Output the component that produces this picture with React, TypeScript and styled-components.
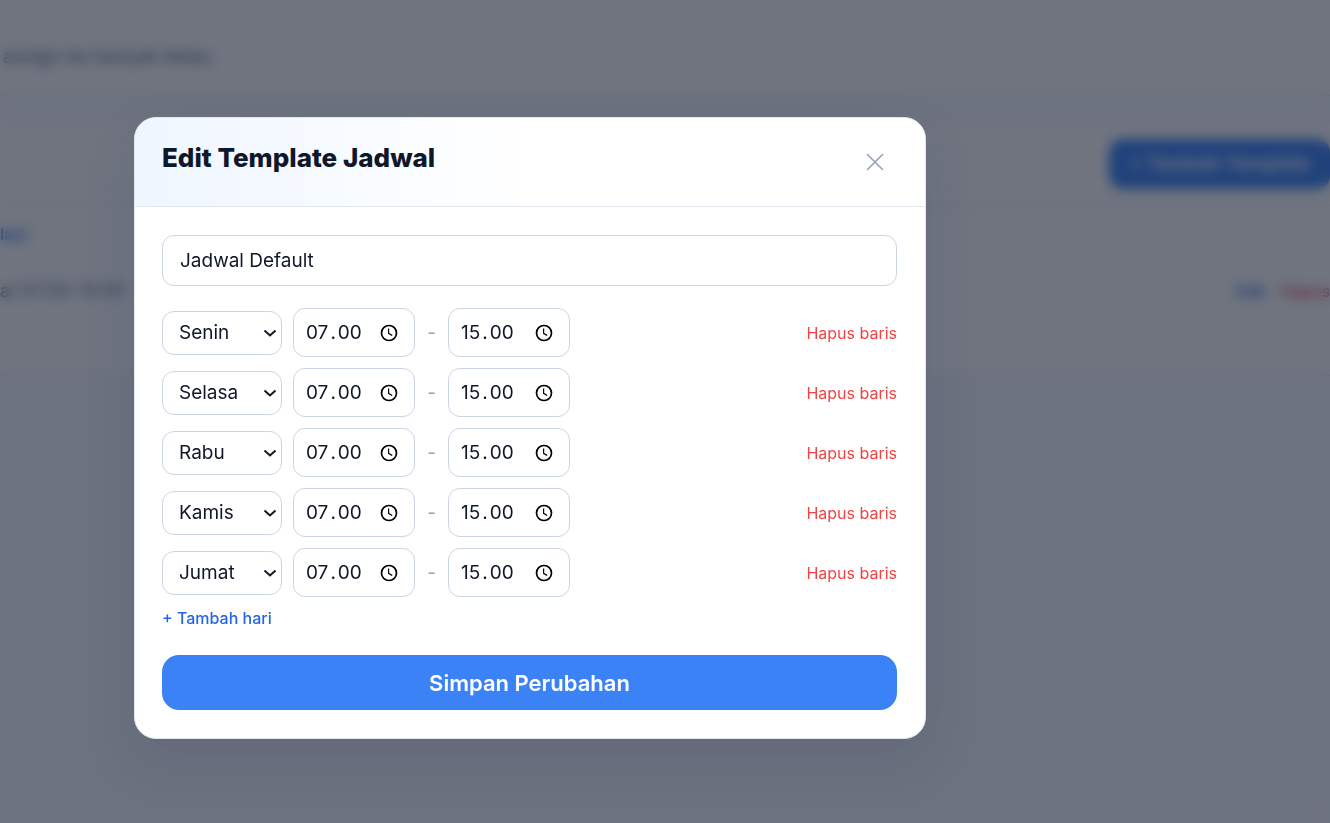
import React from "react";
import styled, { createGlobalStyle } from "styled-components";

const GlobalStyle = createGlobalStyle`
  *, *::before, *::after { box-sizing: border-box; }
  body {
    margin: 0;
    background: #f8fafc;
    color: #0f172a;
    font-family: Inter, "Liberation Sans", sans-serif;
    font-size: 19px;
    line-height: 28px;
  }
  button, input, select { font: inherit; color: inherit; }
`;

const Page = styled.div`
  min-height: 100vh;
  overflow: hidden;
`;

const PageHeader = styled.header`
  background: #ffffff;
  border-bottom: 1px solid #e2e8f0;
  padding: 43px 3px 24px;
  color: #64748b;
`;

const Card = styled.section`
  margin-top: 25px;
  background: #ffffff;
  border-bottom: 1px solid #e2e8f0;
`;

const CardBar = styled.div`
  display: flex;
  justify-content: flex-end;
  padding: 18px 0 16px;
  border-bottom: 1px solid #e2e8f0;
`;

const AddTemplate = styled.button`
  height: 50px;
  padding: 0 20px;
  border: 0;
  border-radius: 14px;
  background: #3b82f6;
  color: #ffffff;
  font-weight: 600;
`;

const CardRow = styled.div<{ $tall?: boolean }>`
  display: flex;
  justify-content: space-between;
  padding: ${(p) => (p.$tall ? "12px 0 70px" : "14px 0 16px")};
  border-top: ${(p) => (p.$tall ? "1px solid #f1f5f9" : "0")};
  color: #64748b;
  font-size: 18px;
`;

const PageLink = styled.a<{ $danger?: boolean }>`
  color: ${(p) => (p.$danger ? "#ef4444" : "#2563eb")};
  text-decoration: none;
  font-size: 16px;
  font-weight: 500;
`;

const RowActions = styled.div`
  display: flex;
  gap: 16px;
`;

const Overlay = styled.div`
  position: fixed;
  inset: 0;
  overflow: auto;
  padding: 117px 134px 40px;
  background: rgba(15, 23, 42, 0.6);
  backdrop-filter: blur(6px);
`;

const Dialog = styled.div`
  width: 100%;
  max-width: 792px;
  overflow: hidden;
  background: #ffffff;
  border: 1px solid #e2e8f0;
  border-radius: 22px;
  box-shadow: 0 22px 52px rgba(20, 50, 100, 0.13);
`;

const DialogHeader = styled.header`
  display: flex;
  justify-content: space-between;
  align-items: flex-start;
  padding: 24px 28px 24px 27px;
  border-bottom: 1px solid #e2e8f0;
  background: linear-gradient(90deg, #eff6ff, #ffffff 50%);
`;

const Title = styled.h2`
  margin: 0;
  font-size: 26px;
  line-height: 32px;
  font-weight: 800;
`;

const CloseButton = styled.button`
  display: grid;
  place-items: center;
  width: 44px;
  height: 40px;
  padding: 0;
  border: 0;
  background: none;
  color: #94a3b8;
`;

const Form = styled.form`
  display: flex;
  flex-direction: column;
  padding: 28px 28px 28px 27px;
`;

const NameInput = styled.input`
  width: 100%;
  height: 51px;
  padding: 0 17px;
  border: 1px solid #cbd5e1;
  border-radius: 12px;
  background: #ffffff;
`;

const Rows = styled.div`
  display: flex;
  flex-direction: column;
  gap: 11px;
  margin-top: 22px;
`;

const Row = styled.div`
  display: flex;
  align-items: center;
  gap: 11px;
`;

const DayBox = styled.div`
  display: grid;
  align-items: center;
  width: 120px;

  svg {
    grid-area: 1 / 1;
    justify-self: end;
    margin-right: 5px;
    pointer-events: none;
  }
`;

const DaySelect = styled.select`
  grid-area: 1 / 1;
  appearance: none;
  width: 100%;
  height: 44px;
  padding: 0 24px 0 16px;
  border: 1px solid #cbd5e1;
  border-radius: 12px;
  background: #ffffff;
`;

const TimeBox = styled.div`
  display: flex;
  align-items: center;
  width: 122px;
  height: 49px;
  padding: 0 16px 0 11px;
  border: 1px solid #cbd5e1;
  border-radius: 12px;
  background: #ffffff;
`;

const TimePart = styled.input`
  field-sizing: content;
  padding: 0 1px;
  border: 0;
  background: none;
`;

const TimeDot = styled.span`
  padding: 0 1px;
`;

const ClockButton = styled.button`
  display: grid;
  margin-left: auto;
  padding: 0;
  border: 0;
  background: none;
  color: #000000;
`;

const Dash = styled.span`
  width: 11px;
  text-align: center;
  color: #94a3b8;
`;

const RemoveButton = styled.button`
  margin-left: auto;
  padding: 0;
  border: 0;
  background: none;
  color: #ef4444;
  font-size: 16px;
`;

const AddDay = styled.button`
  align-self: flex-start;
  margin-top: 7px;
  padding: 0;
  border: 0;
  background: none;
  color: #2563eb;
  font-size: 16px;
  font-weight: 500;
`;

const SaveButton = styled.button`
  height: 55px;
  margin-top: 23px;
  border: 0;
  border-radius: 17px;
  background: #3b82f6;
  color: #ffffff;
  font-size: 22px;
  font-weight: 600;
`;

function TimeField({ label, value }: { label: string; value: string }) {
  const [hour, minute] = value.split(".");
  return (
    <TimeBox role="group" aria-label={label}>
      <TimePart aria-label="Jam" inputMode="numeric" maxLength={2} defaultValue={hour} />
      <TimeDot>.</TimeDot>
      <TimePart aria-label="Menit" inputMode="numeric" maxLength={2} defaultValue={minute} />
      <ClockButton type="button" aria-label="Pilih waktu">
        <svg width="18" height="18" viewBox="0 0 18 18" fill="none" stroke="currentColor">
          <circle cx="9" cy="9" r="7.5" strokeWidth="1.7" />
          <path d="M8.6 4.6v4.7l3.6 2.2" strokeWidth="1.2" />
        </svg>
      </ClockButton>
    </TimeBox>
  );
}

const days = ["Senin", "Selasa", "Rabu", "Kamis", "Jumat"];

export default function App() {
  return (
    <>
      <GlobalStyle />
      <Page>
        <PageHeader>assign ke banyak kelas.</PageHeader>
        <Card>
          <CardBar>
            <AddTemplate type="button">+ Tambah Template</AddTemplate>
          </CardBar>
          <CardRow><PageLink href="#kelas">las)</PageLink></CardRow>
          <CardRow $tall>
            <span>at 07:00-15:00</span>
            <RowActions>
              <PageLink href="#edit">Edit</PageLink>
              <PageLink href="#hapus" $danger>Hapus</PageLink>
            </RowActions>
          </CardRow>
        </Card>
      </Page>
      <Overlay>
        <Dialog role="dialog" aria-modal="true" aria-labelledby="dialog-title">
          <DialogHeader>
            <Title id="dialog-title">Edit Template Jadwal</Title>
            <CloseButton type="button" aria-label="Tutup">
              <svg width="18" height="18" viewBox="0 0 18 18" fill="none" stroke="currentColor" strokeWidth="1.6">
                <path d="M1.5 1.5l15 15M16.5 1.5l-15 15" strokeLinecap="round" />
              </svg>
            </CloseButton>
          </DialogHeader>
          <Form onSubmit={(e) => e.preventDefault()}>
            <NameInput aria-label="Nama template" defaultValue="Jadwal Default" />
            <Rows>
              {days.map((day) => (
                <Row key={day}>
                  <DayBox>
                    <DaySelect aria-label="Hari" defaultValue={day}>
                      {days.map((d) => <option key={d}>{d}</option>)}
                    </DaySelect>
                    <svg width="14" height="10" viewBox="0 0 14 10" fill="none" stroke="#0f172a" strokeWidth="2">
                      <path d="M1.5 2.5L7 7.5L12.5 2.5" />
                    </svg>
                  </DayBox>
                  <TimeField label={`Jam masuk ${day}`} value="07.00" />
                  <Dash>-</Dash>
                  <TimeField label={`Jam pulang ${day}`} value="15.00" />
                  <RemoveButton type="button">Hapus baris</RemoveButton>
                </Row>
              ))}
            </Rows>
            <AddDay type="button">+ Tambah hari</AddDay>
            <SaveButton type="submit">Simpan Perubahan</SaveButton>
          </Form>
        </Dialog>
      </Overlay>
    </>
  );
}
